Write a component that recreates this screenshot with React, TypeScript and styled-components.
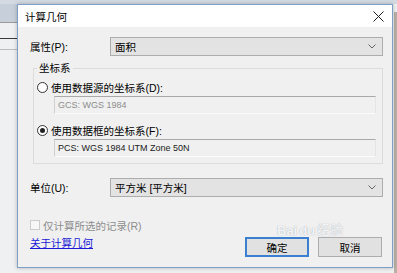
import React from 'react';
import styled, { createGlobalStyle } from 'styled-components';

const GlobalStyle = createGlobalStyle`
  html, body {
    margin: 0;
    padding: 0;
  }
  body {
    width: 397px;
    height: 273px;
    overflow: hidden;
    font-family: "Liberation Sans", "Noto Sans CJK SC", sans-serif;
    font-size: 10.5px;
    color: #000;
  }
`;

const Desktop = styled.div`
  width: 397px;
  height: 273px;
  box-sizing: border-box;
  padding: 4px 0 0 17px;
  background:
    linear-gradient(#d3dae2, #d3dae2) 0 0 / 100% 4px no-repeat,
    linear-gradient(#c7d0da, #c7d0da) 0 0 / 17px 22px no-repeat,
    linear-gradient(#9a9a9a, #9a9a9a) 0 22px / 17px 1px no-repeat,
    linear-gradient(#3a3a3a, #3a3a3a) 0 38px / 17px 1px no-repeat,
    linear-gradient(#bdbdbd, #bdbdbd) 0 49px / 17px 1px no-repeat,
    linear-gradient(#b9afa5, #b9afa5) 394px 12px / 3px 100% no-repeat,
    #eef0f2;
`;

const Dialog = styled.div`
  position: relative;
  width: 376px;
  height: 264px;
  box-sizing: border-box;
  border: 1px solid #7f9fc6;
  box-shadow: 0 0 4px rgba(0, 0, 0, 0.25);
  background: #f0f0f0;
  display: flex;
  flex-direction: column;
`;

const TitleBar = styled.div`
  height: 22px;
  flex: none;
  background: #fff;
  display: flex;
  align-items: center;
  padding-left: 7px;
`;

const Title = styled.span`
  flex: 1;
  font-size: 10.5px;
`;

const CloseButton = styled.div`
  width: 28px;
  height: 22px;
  display: flex;
  align-items: center;
  justify-content: center;
`;

const Body = styled.div`
  flex: 1;
  display: flex;
  flex-direction: column;
  padding: 10px 9px 0 12px;
`;

const FieldRow = styled.div<{ $top: number }>`
  display: flex;
  align-items: center;
  height: 19px;
  margin-top: ${p => p.$top}px;
`;

const Label = styled.span`
  width: 80px;
  flex: none;
`;

const Combo = styled.div`
  flex: 1;
  height: 19px;
  box-sizing: border-box;
  border: 1px solid #adadad;
  background: #e3e3e3;
  display: flex;
  align-items: center;
  padding: 0 6px 0 4px;
`;

const ComboText = styled.span`
  flex: 1;
`;

const GroupBox = styled.fieldset`
  margin: 5px 0 0 3px;
  padding: 0 6px 6px 3px;
  border: 1px solid #dcdcdc;
  min-width: 0;
  display: flex;
  flex-direction: column;
`;

const Legend = styled.legend`
  padding: 0 2px;
  line-height: 14px;
`;

const OptionRow = styled.label<{ $top: number }>`
  display: flex;
  align-items: center;
  gap: 3px;
  height: 16px;
  margin-top: ${p => p.$top}px;
`;

const Radio = styled.span<{ $checked?: boolean }>`
  width: 11px;
  height: 11px;
  box-sizing: border-box;
  border: 1px solid #333;
  border-radius: 50%;
  background: #fff;
  display: flex;
  align-items: center;
  justify-content: center;
  &::after {
    content: '';
    width: 5px;
    height: 5px;
    border-radius: 50%;
    background: ${p => (p.$checked ? '#222' : 'transparent')};
  }
`;

const TextBox = styled.div<{ $disabled?: boolean }>`
  margin: 1px 0 0 17px;
  height: 18px;
  box-sizing: border-box;
  border-top: 1px solid #a9a9a9;
  border-left: 1px solid #cfcfcf;
  border-right: 1px solid #e4e4e4;
  border-bottom: 1px solid #fbfbfb;
  background: #f0f0f0;
  display: flex;
  align-items: center;
  padding-left: 3px;
  font-size: 9px;
  color: ${p => (p.$disabled ? '#8d8d8d' : '#222')};
`;

const CheckRow = styled.div`
  display: flex;
  align-items: center;
  gap: 3px;
  height: 14px;
  margin-top: 21px;
  color: #8d8d8d;
`;

const CheckBox = styled.span`
  width: 10px;
  height: 10px;
  box-sizing: border-box;
  border: 1px solid #cccccc;
  background: #f7f7f7;
`;

const Footer = styled.div`
  display: flex;
  align-items: flex-start;
  margin-top: 4px;
`;

const HelpLink = styled.a`
  flex: 1;
  line-height: 14px;
  color: #1a1ad6;
  text-decoration: underline;
  cursor: pointer;
`;

const Buttons = styled.div`
  display: flex;
  gap: 9px;
  margin: 1px 1px 0 0;
`;

const Button = styled.button<{ $primary?: boolean }>`
  width: 64px;
  height: 20px;
  box-sizing: border-box;
  padding: 0;
  font: inherit;
  color: #000;
  background: #e1e1e1;
  border: ${p => (p.$primary ? '2px solid #3b7fd0' : '1px solid #adadad')};
`;

const Watermark = styled.div`
  position: absolute;
  left: 259px;
  top: 214px;
  display: flex;
  align-items: flex-end;
  gap: 2px;
  color: rgba(255, 255, 255, 0.9);
  text-shadow: 0 0 1px rgba(110, 120, 140, 0.7);
  font-family: "Liberation Sans", sans-serif;
  font-weight: bold;
  font-size: 13px;
  pointer-events: none;
`;

const WatermarkCjk = styled.span`
  font-family: "Noto Sans CJK SC", sans-serif;
  font-weight: normal;
`;

const CloseIcon = () => (
  <svg width="11" height="11" viewBox="0 0 11 11">
    <path d="M0.5 0.5 L10.5 10.5 M10.5 0.5 L0.5 10.5" stroke="#222" strokeWidth="1" />
  </svg>
);

const Chevron = () => (
  <svg width="8" height="5" viewBox="0 0 8 5">
    <path d="M0.5 0.5 L4 4 L7.5 0.5" stroke="#666" strokeWidth="1" fill="none" />
  </svg>
);

const App: React.FC = () => {
  return (
    <>
      <GlobalStyle />
      <Desktop>
        <Dialog>
          <TitleBar>
            <Title>计算几何</Title>
            <CloseButton>
              <CloseIcon />
            </CloseButton>
          </TitleBar>
          <Body>
            <FieldRow $top={0}>
              <Label>属性(P):</Label>
              <Combo>
                <ComboText>面积</ComboText>
                <Chevron />
              </Combo>
            </FieldRow>
            <GroupBox>
              <Legend>坐标系</Legend>
              <OptionRow $top={4}>
                <Radio />
                使用数据源的坐标系(D):
              </OptionRow>
              <TextBox $disabled>GCS: WGS 1984</TextBox>
              <OptionRow $top={8}>
                <Radio $checked />
                使用数据框的坐标系(F):
              </OptionRow>
              <TextBox>PCS: WGS 1984 UTM Zone 50N</TextBox>
            </GroupBox>
            <FieldRow $top={14}>
              <Label>单位(U):</Label>
              <Combo>
                <ComboText>平方米 [平方米]</ComboText>
                <Chevron />
              </Combo>
            </FieldRow>
            <CheckRow>
              <CheckBox />
              仅计算所选的记录(R)
            </CheckRow>
            <Footer>
              <HelpLink>关于计算几何</HelpLink>
              <Buttons>
                <Button $primary>确定</Button>
                <Button>取消</Button>
              </Buttons>
            </Footer>
          </Body>
          <Watermark>
            <span>Bai</span>
            <span>du</span>
            <WatermarkCjk>经验</WatermarkCjk>
          </Watermark>
        </Dialog>
      </Desktop>
    </>
  );
};

export default App;
